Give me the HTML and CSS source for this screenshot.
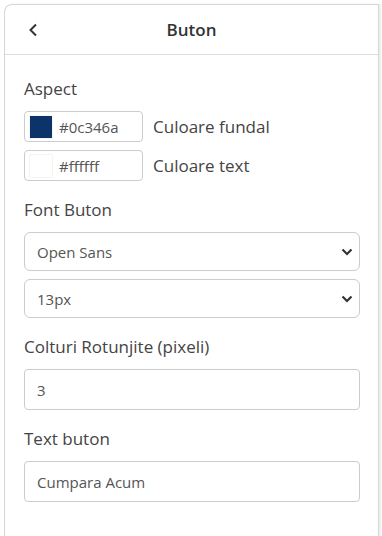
FILE: index.html
```html
<!DOCTYPE html>
<html lang="ro">
<head>
    <meta charset="UTF-8">
    <meta name="viewport" content="width=device-width, initial-scale=1.0">
    <title>Buton</title>
    <link rel="stylesheet" href="styles.css">
</head>
<body>
    <div class="panel">
        <div class="panel-header">
            <a href="#" class="back">
                <svg width="10" height="14" viewBox="0 0 10 14"><path d="M8 1.5 2.5 7 8 12.5" fill="none" stroke="#333" stroke-width="2"/></svg>
            </a>
            <h1>Buton</h1>
            <span></span>
        </div>

        <div class="panel-body">
            <div class="label">Aspect</div>
            <div class="color-row">
                <div class="color-box">
                    <span class="swatch" style="background-color: #0c346a;"></span>
                    <span>#0c346a</span>
                </div>
                <span class="color-name">Culoare fundal</span>
            </div>
            <div class="color-row">
                <div class="color-box">
                    <span class="swatch" style="background-color: #ffffff;"></span>
                    <span>#ffffff</span>
                </div>
                <span class="color-name">Culoare text</span>
            </div>

            <div class="label">Font Buton</div>
            <div class="select">
                <span>Open Sans</span>
                <svg width="12" height="8" viewBox="0 0 12 8"><path d="M1.5 1.5 6 6 10.5 1.5" fill="none" stroke="#333" stroke-width="2.2"/></svg>
            </div>
            <div class="select">
                <span>13px</span>
                <svg width="12" height="8" viewBox="0 0 12 8"><path d="M1.5 1.5 6 6 10.5 1.5" fill="none" stroke="#333" stroke-width="2.2"/></svg>
            </div>

            <div class="label">Colturi Rotunjite (pixeli)</div>
            <div class="input">3</div>

            <div class="label">Text buton</div>
            <div class="input">Cumpara Acum</div>
        </div>
    </div>
</body>
</html>
```

FILE: styles.css
```css
body {
    font-family: "Open Sans", sans-serif;
    margin: 0;
    padding: 4px 0 0 4px;
    background-color: #fff;
    color: #444;
    overflow: hidden;
}
.panel {
    width: 375px;
    height: 532px;
    box-sizing: border-box;
    border: 1px solid #d6d6d6;
    border-bottom: none;
    border-radius: 8px 0 0 0;
    box-shadow: 2px 0 2px rgba(0, 0, 0, 0.08);
}
.panel-header {
    height: 49px;
    display: grid;
    grid-template-columns: 1fr auto 1fr;
    align-items: center;
    border-bottom: 1px solid #ddd;
}
.back {
    display: flex;
    padding-left: 23px;
}
h1 {
    margin: 0;
    font-size: 17px;
    font-weight: 600;
    color: #333;
}
.panel-body {
    padding: 5px 18px 0 19px;
}
.label {
    font-size: 17px;
    line-height: 23px;
    margin: 17px 0 11px;
}
.panel-body .label:first-child {
    margin-top: 17px;
}
.color-row {
    display: flex;
    align-items: center;
    gap: 10px;
    margin-bottom: 8px;
}
.color-box {
    width: 119px;
    height: 31px;
    box-sizing: border-box;
    border: 1px solid #ccc;
    border-radius: 4px;
    display: flex;
    align-items: center;
    gap: 7px;
    padding-left: 5px;
    font-size: 15px;
    color: #555;
}
.swatch {
    width: 22px;
    height: 22px;
    box-shadow: 0 0 1px rgba(0, 0, 0, 0.25);
}
.color-name {
    font-size: 17px;
}
.select {
    height: 39px;
    box-sizing: border-box;
    border: 1px solid #ccc;
    border-radius: 6px;
    display: flex;
    align-items: center;
    justify-content: space-between;
    padding: 0 6px 0 12px;
    font-size: 15px;
    color: #555;
    margin-bottom: 8px;
}
.input {
    height: 41px;
    box-sizing: border-box;
    border: 1px solid #ccc;
    border-radius: 4px;
    display: flex;
    align-items: center;
    padding-left: 12px;
    font-size: 15px;
    color: #555;
}
```
